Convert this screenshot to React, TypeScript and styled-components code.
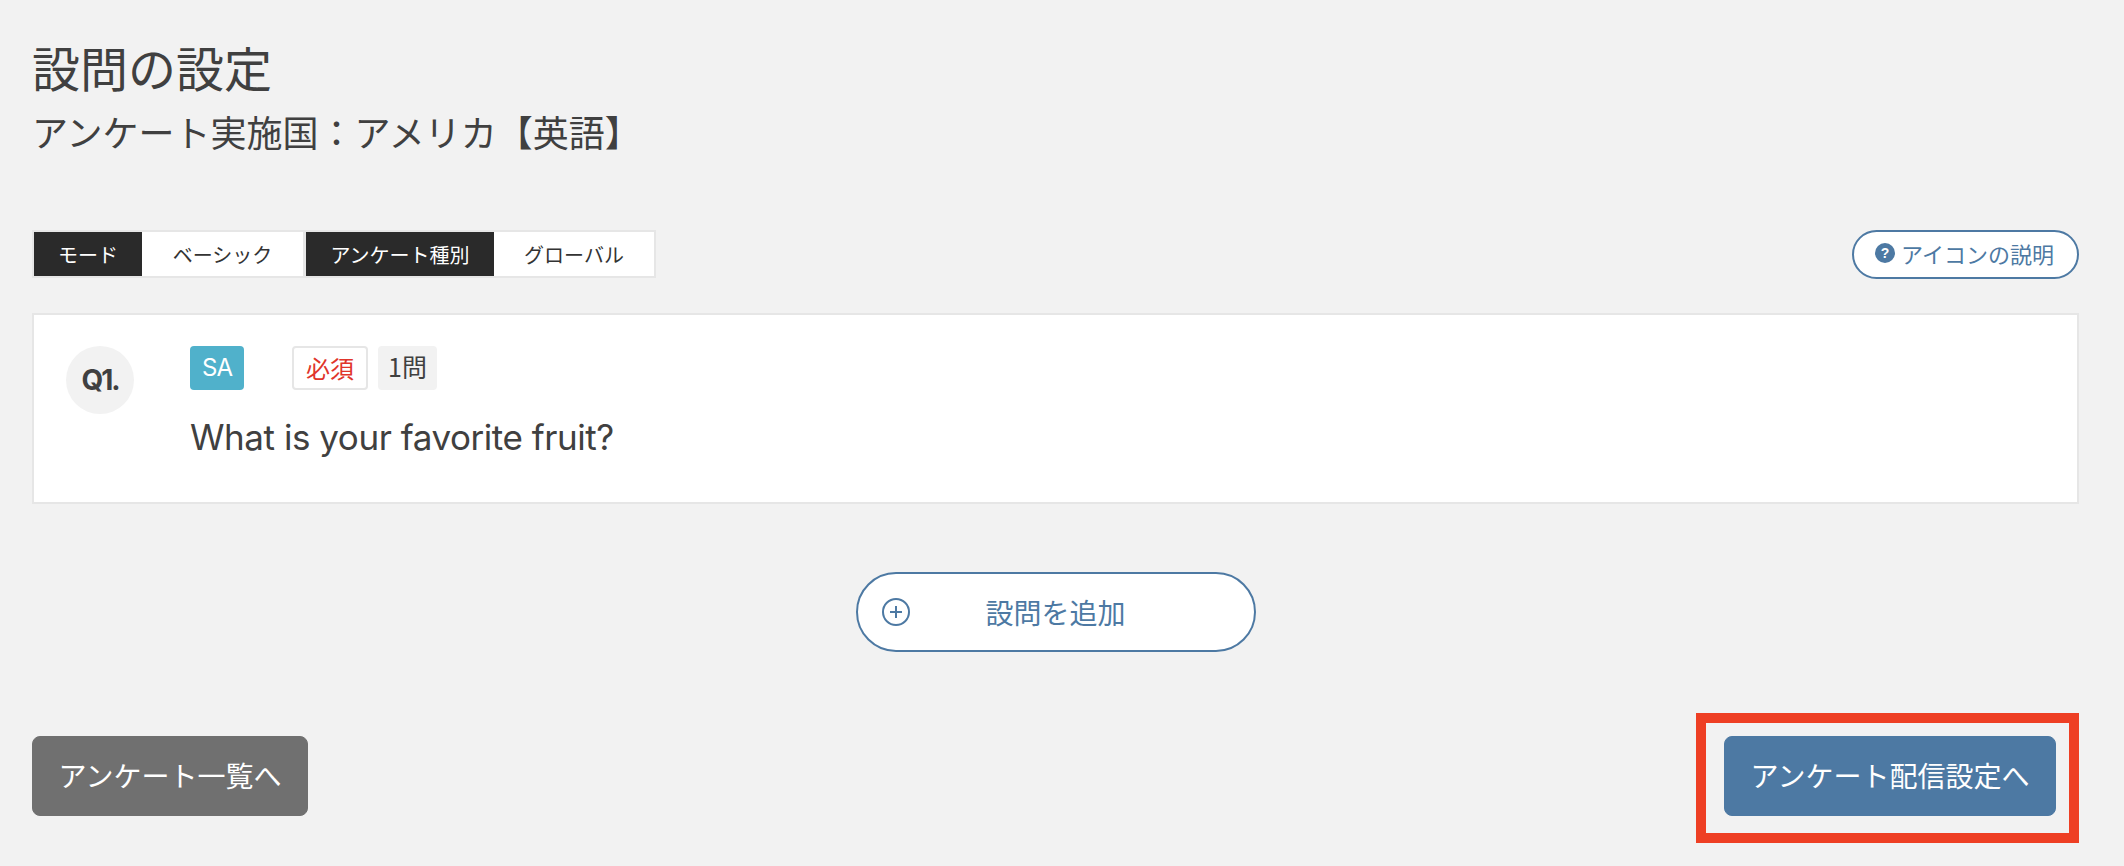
import React from 'react';
import styled, { createGlobalStyle } from 'styled-components';

const GlobalStyle = createGlobalStyle`
  html, body {
    margin: 0;
    padding: 0;
    background: #f2f2f2;
  }
  body {
    font-family: "Inter", "Noto Sans CJK JP", sans-serif;
    color: #404040;
  }
  * {
    box-sizing: border-box;
  }
`;

const blue = '#4d79a3';

const Page = styled.div`
  width: 2124px;
  height: 866px;
  padding: 34px 45px 0 32px;
  font-family: "Noto Sans CJK JP", sans-serif;
`;

const Title = styled.h1`
  margin: 0;
  height: 65px;
  font-size: 48px;
  line-height: 65px;
  font-weight: 400;
  color: #404040;
`;

const SubTitle = styled.h2`
  margin: 0;
  height: 49px;
  padding-top: 8px;
  font-size: 36px;
  line-height: 48px;
  font-weight: 400;
  color: #404040;
`;

const InfoRow = styled.div`
  margin-top: 82px;
  display: flex;
  justify-content: space-between;
  align-items: flex-start;
`;

const ModeList = styled.div`
  display: flex;
  gap: 3px;
  padding: 2px;
  height: 48px;
  background: #e6e6e6;
`;

const ModePair = styled.div`
  display: flex;
`;

const ModeCell = styled.span<{ $dark?: boolean; $width: number }>`
  display: flex;
  align-items: center;
  justify-content: center;
  width: ${(p) => p.$width}px;
  font-size: 20px;
  background: ${(p) => (p.$dark ? '#2a2a2a' : '#ffffff')};
  color: ${(p) => (p.$dark ? '#ffffff' : '#333333')};
`;

const HelpButton = styled.button`
  display: flex;
  align-items: center;
  justify-content: center;
  gap: 6px;
  width: 227px;
  height: 49px;
  padding: 0 2px 3px 0;
  border: 2px solid ${blue};
  border-radius: 25px;
  background: #ffffff;
  color: ${blue};
  font-family: inherit;
  font-size: 22px;
`;

const QuestionCard = styled.div`
  margin-top: 34px;
  height: 191px;
  display: flex;
  padding: 31px 32px;
  background: #ffffff;
  border: 2px solid #e6e6e6;
`;

const QuestionNumber = styled.div`
  flex: none;
  width: 68px;
  height: 68px;
  margin-right: 56px;
  display: flex;
  align-items: center;
  justify-content: center;
  border-radius: 50%;
  background: #f2f2f2;
  font-family: "Inter", sans-serif;
  font-size: 28px;
  font-weight: 700;
  letter-spacing: -2px;
  color: #404040;
`;

const QuestionBody = styled.div`
  display: flex;
  flex-direction: column;
`;

const BadgeRow = styled.div`
  display: flex;
  height: 44px;
`;

const Badge = styled.span`
  display: flex;
  align-items: center;
  justify-content: center;
  height: 44px;
  padding-bottom: 2px;
  border-radius: 4px;
  font-size: 24px;
`;

const TypeBadge = styled(Badge)`
  width: 54px;
  margin-right: 48px;
  background: #50b1cb;
  color: #ffffff;
  font-family: "Inter", sans-serif;
  letter-spacing: -1px;
`;

const RequiredBadge = styled(Badge)`
  width: 76px;
  margin-right: 10px;
  border: 2px solid #e6e6e6;
  background: #ffffff;
  color: #e0352b;
`;

const CountBadge = styled(Badge)`
  width: 59px;
  padding-bottom: 4px;
  background: #f2f2f2;
  color: #404040;
  font-size: 25px;
`;

const QuestionText = styled.p`
  margin: 23px 0 0;
  font-family: "Inter", sans-serif;
  font-size: 35px;
  letter-spacing: -0.45px;
  line-height: 48px;
  color: #404040;
`;

const AddRow = styled.div`
  margin-top: 68px;
  display: flex;
  justify-content: center;
`;

const AddButton = styled.button`
  position: relative;
  width: 400px;
  height: 80px;
  padding: 0;
  border: 2px solid ${blue};
  border-radius: 40px;
  background: #ffffff;
  color: ${blue};
  font-family: inherit;
  font-size: 28px;
`;

const AddIcon = styled.svg`
  position: absolute;
  left: 24px;
  top: 24px;
`;

const Footer = styled.div`
  margin-top: 61px;
  display: flex;
  justify-content: space-between;
  align-items: flex-start;
`;

const NavButton = styled.button<{ $primary?: boolean }>`
  height: 80px;
  padding: 0 0 3px;
  border: 1px solid ${(p) => (p.$primary ? '#4d79a3' : '#707070')};
  border-radius: 8px;
  background: ${(p) => (p.$primary ? '#4d79a3' : '#707070')};
  color: #ffffff;
  font-family: inherit;
  font-size: 28px;
  width: ${(p) => (p.$primary ? 332 : 276)}px;
  margin-top: ${(p) => (p.$primary ? 0 : 23)}px;
`;

const HighlightFrame = styled.div`
  display: flex;
  width: 383px;
  height: 130px;
  padding: 13px 13px 17px 18px;
  border: 10px solid #ee3f24;
`;

const HelpIcon = () => (
  <svg width="20" height="20" viewBox="0 0 20 20">
    <circle cx="10" cy="10" r="10" fill={blue} />
    <text x="10" y="15" textAnchor="middle" fontSize="14" fontWeight="700" fill="#fff" fontFamily="Liberation Sans, sans-serif">?</text>
  </svg>
);

export default function App() {
  return (
    <>
      <GlobalStyle />
      <Page>
        <Title>設問の設定</Title>
        <SubTitle>アンケート実施国：アメリカ【英語】</SubTitle>

        <InfoRow>
          <ModeList>
            <ModePair>
              <ModeCell $dark $width={108}>モード</ModeCell>
              <ModeCell $width={161}>ベーシック</ModeCell>
            </ModePair>
            <ModePair>
              <ModeCell $dark $width={188}>アンケート種別</ModeCell>
              <ModeCell $width={160}>グローバル</ModeCell>
            </ModePair>
          </ModeList>
          <HelpButton>
            <HelpIcon />
            アイコンの説明
          </HelpButton>
        </InfoRow>

        <QuestionCard>
          <QuestionNumber>Q1.</QuestionNumber>
          <QuestionBody>
            <BadgeRow>
              <TypeBadge>SA</TypeBadge>
              <RequiredBadge>必須</RequiredBadge>
              <CountBadge>1問</CountBadge>
            </BadgeRow>
            <QuestionText>What is your favorite fruit?</QuestionText>
          </QuestionBody>
        </QuestionCard>

        <AddRow>
          <AddButton>
            <AddIcon width="28" height="28" viewBox="0 0 28 28" fill="none" stroke={blue} strokeWidth="2">
              <circle cx="14" cy="14" r="13" />
              <path d="M14 8v12M8 14h12" />
            </AddIcon>
            設問を追加
          </AddButton>
        </AddRow>

        <Footer>
          <NavButton>アンケート一覧へ</NavButton>
          <HighlightFrame>
            <NavButton $primary>アンケート配信設定へ</NavButton>
          </HighlightFrame>
        </Footer>
      </Page>
    </>
  );
}
